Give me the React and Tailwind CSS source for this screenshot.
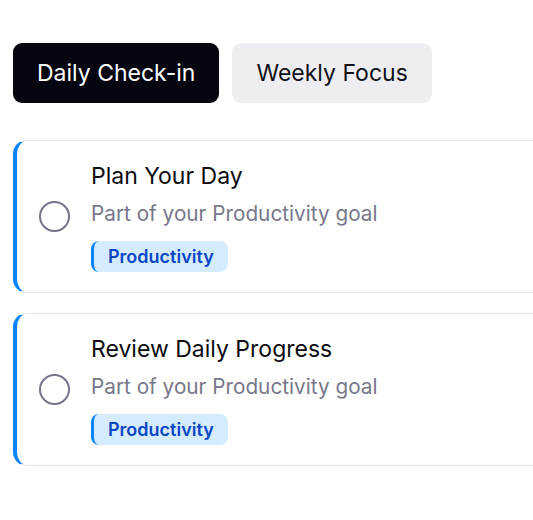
const tasks = [
  { id: 1, title: "Plan Your Day", goal: "Productivity" },
  { id: 2, title: "Review Daily Progress", goal: "Productivity" },
];

export default function App() {
  return (
    <div className="h-[520px] w-[533px] overflow-hidden bg-white font-['Inter',sans-serif]">
      <div className="w-[580px] px-[13px] pt-[43px]">
        <div className="flex gap-[13px]">
          <button className="h-[60px] rounded-[9px] bg-[#05050f] px-6 text-[23px] text-white">
            Daily Check-in
          </button>
          <button className="h-[60px] rounded-[9px] bg-[#eeeef2] px-6 text-[23px] text-[#111118]">
            Weekly Focus
          </button>
        </div>

        <div className="mt-[37px] flex flex-col gap-5">
          {tasks.map((t) => (
            <TaskCard key={t.id} task={t} />
          ))}
        </div>
      </div>
    </div>
  );
}

function TaskCard({ task }) {
  return (
    <div className="flex h-[153px] items-center gap-[21px] rounded-[14px] border border-l-4 border-[#e5e5ea] border-l-[#0a84ff] bg-white pl-[22px]">
      <div className="h-[31px] w-[31px] shrink-0 rounded-full border-[2.5px] border-[#74748a]" />
      <div className="flex flex-col">
        <p className="text-[23px] leading-[30px] text-[#0b0b10]">{task.title}</p>
        <p className="mt-[10px] text-[20.75px] leading-[26px] text-[#77778a]">
          Part of your {task.goal} goal
        </p>
        <span className="mt-[14px] w-fit rounded-[8px] border-l-[3px] border-[#0a84ff] bg-[#d5ebff] px-[14px] py-[4px] text-[18px] font-semibold leading-[23px] text-[#0746c4]">
          {task.goal}
        </span>
      </div>
    </div>
  );
}
